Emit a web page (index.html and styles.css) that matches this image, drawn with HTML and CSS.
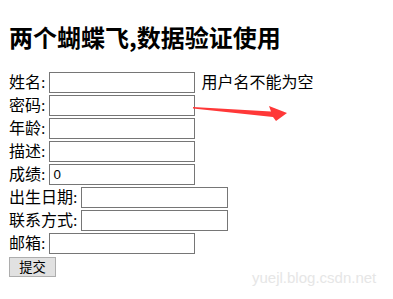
FILE: index.html
```html
<!DOCTYPE html>
<html lang="zh">
<head>
<meta charset="utf-8">
<title>两个蝴蝶飞,数据验证使用</title>
<link rel="stylesheet" href="styles.css">
</head>
<body>
<h2 class="title">两个蝴蝶飞,数据验证使用</h2>
<form class="form">
  <div class="row"><span class="lbl">姓名:</span><input class="field" type="text"><span class="msg">用户名不能为空</span></div>
  <div class="row"><span class="lbl">密码:</span><input class="field" type="password"></div>
  <div class="row"><span class="lbl">年龄:</span><input class="field" type="text"></div>
  <div class="row"><span class="lbl">描述:</span><input class="field" type="text"></div>
  <div class="row"><span class="lbl">成绩:</span><input class="field" type="text" value="0"></div>
  <div class="row"><span class="lbl">出生日期:</span><input class="field wide" type="text"></div>
  <div class="row"><span class="lbl">联系方式:</span><input class="field wide" type="text"></div>
  <div class="row"><span class="lbl">邮箱:</span><input class="field" type="text"></div>
  <div class="row"><button class="submit" type="button">提交</button></div>
</form>
<svg class="arrow" width="393" height="299" viewBox="0 0 393 299">
  <polygon points="193,107 271,111.5 269,106 287,113 276,121 273,117 193,108.6" fill="#ff3838"/>
</svg>
<div class="watermark">yuejl.blog.csdn.net</div>
</body>
</html>
```

FILE: styles.css
```css
html, body {
  margin: 0;
  padding: 0;
}
body {
  padding: 8px 9px;
  font-family: "Liberation Serif", "Noto Sans CJK SC", serif;
  font-size: 16px;
  color: #000;
  background: #fff;
  position: relative;
  width: 393px;
  height: 299px;
  box-sizing: border-box;
  overflow: hidden;
}
.title {
  margin: 13px 0 18px;
  font-size: 24px;
  line-height: 32px;
  font-weight: bold;
  font-family: "Noto Sans CJK SC", "Liberation Sans", sans-serif;
}
.form {
  margin: 0;
  display: flex;
  flex-direction: column;
}
.row {
  display: flex;
  align-items: center;
  height: 23px;
  line-height: 23px;
  white-space: nowrap;
}
.lbl {
  margin-right: 4px;
}
.field {
  box-sizing: border-box;
  width: 146px;
  height: 21px;
  margin: 0;
  border: 1px solid #767676;
  padding: 1px 3px;
  font-family: "Liberation Sans", Arial, sans-serif;
  font-size: 13.33px;
  color: #000;
  background: #fff;
  border-radius: 0;
  outline: none;
}
.wide {
  width: 147px;
}
.msg {
  margin-left: 6px;
}
.submit {
  box-sizing: border-box;
  width: 47px;
  height: 20px;
  margin: 0;
  padding: 0;
  border: 1px solid #adadad;
  background: #e1e1e1;
  font-family: "Noto Sans CJK SC", sans-serif;
  font-size: 13.33px;
  line-height: 18px;
  color: #000;
  border-radius: 0;
}
.arrow {
  position: absolute;
  left: 0;
  top: 0;
  pointer-events: none;
}
.watermark {
  position: absolute;
  left: 252px;
  top: 268px;
  font-family: "Liberation Sans", Arial, sans-serif;
  font-size: 15px;
  color: #e6e6e6;
  line-height: 20px;
}
```
